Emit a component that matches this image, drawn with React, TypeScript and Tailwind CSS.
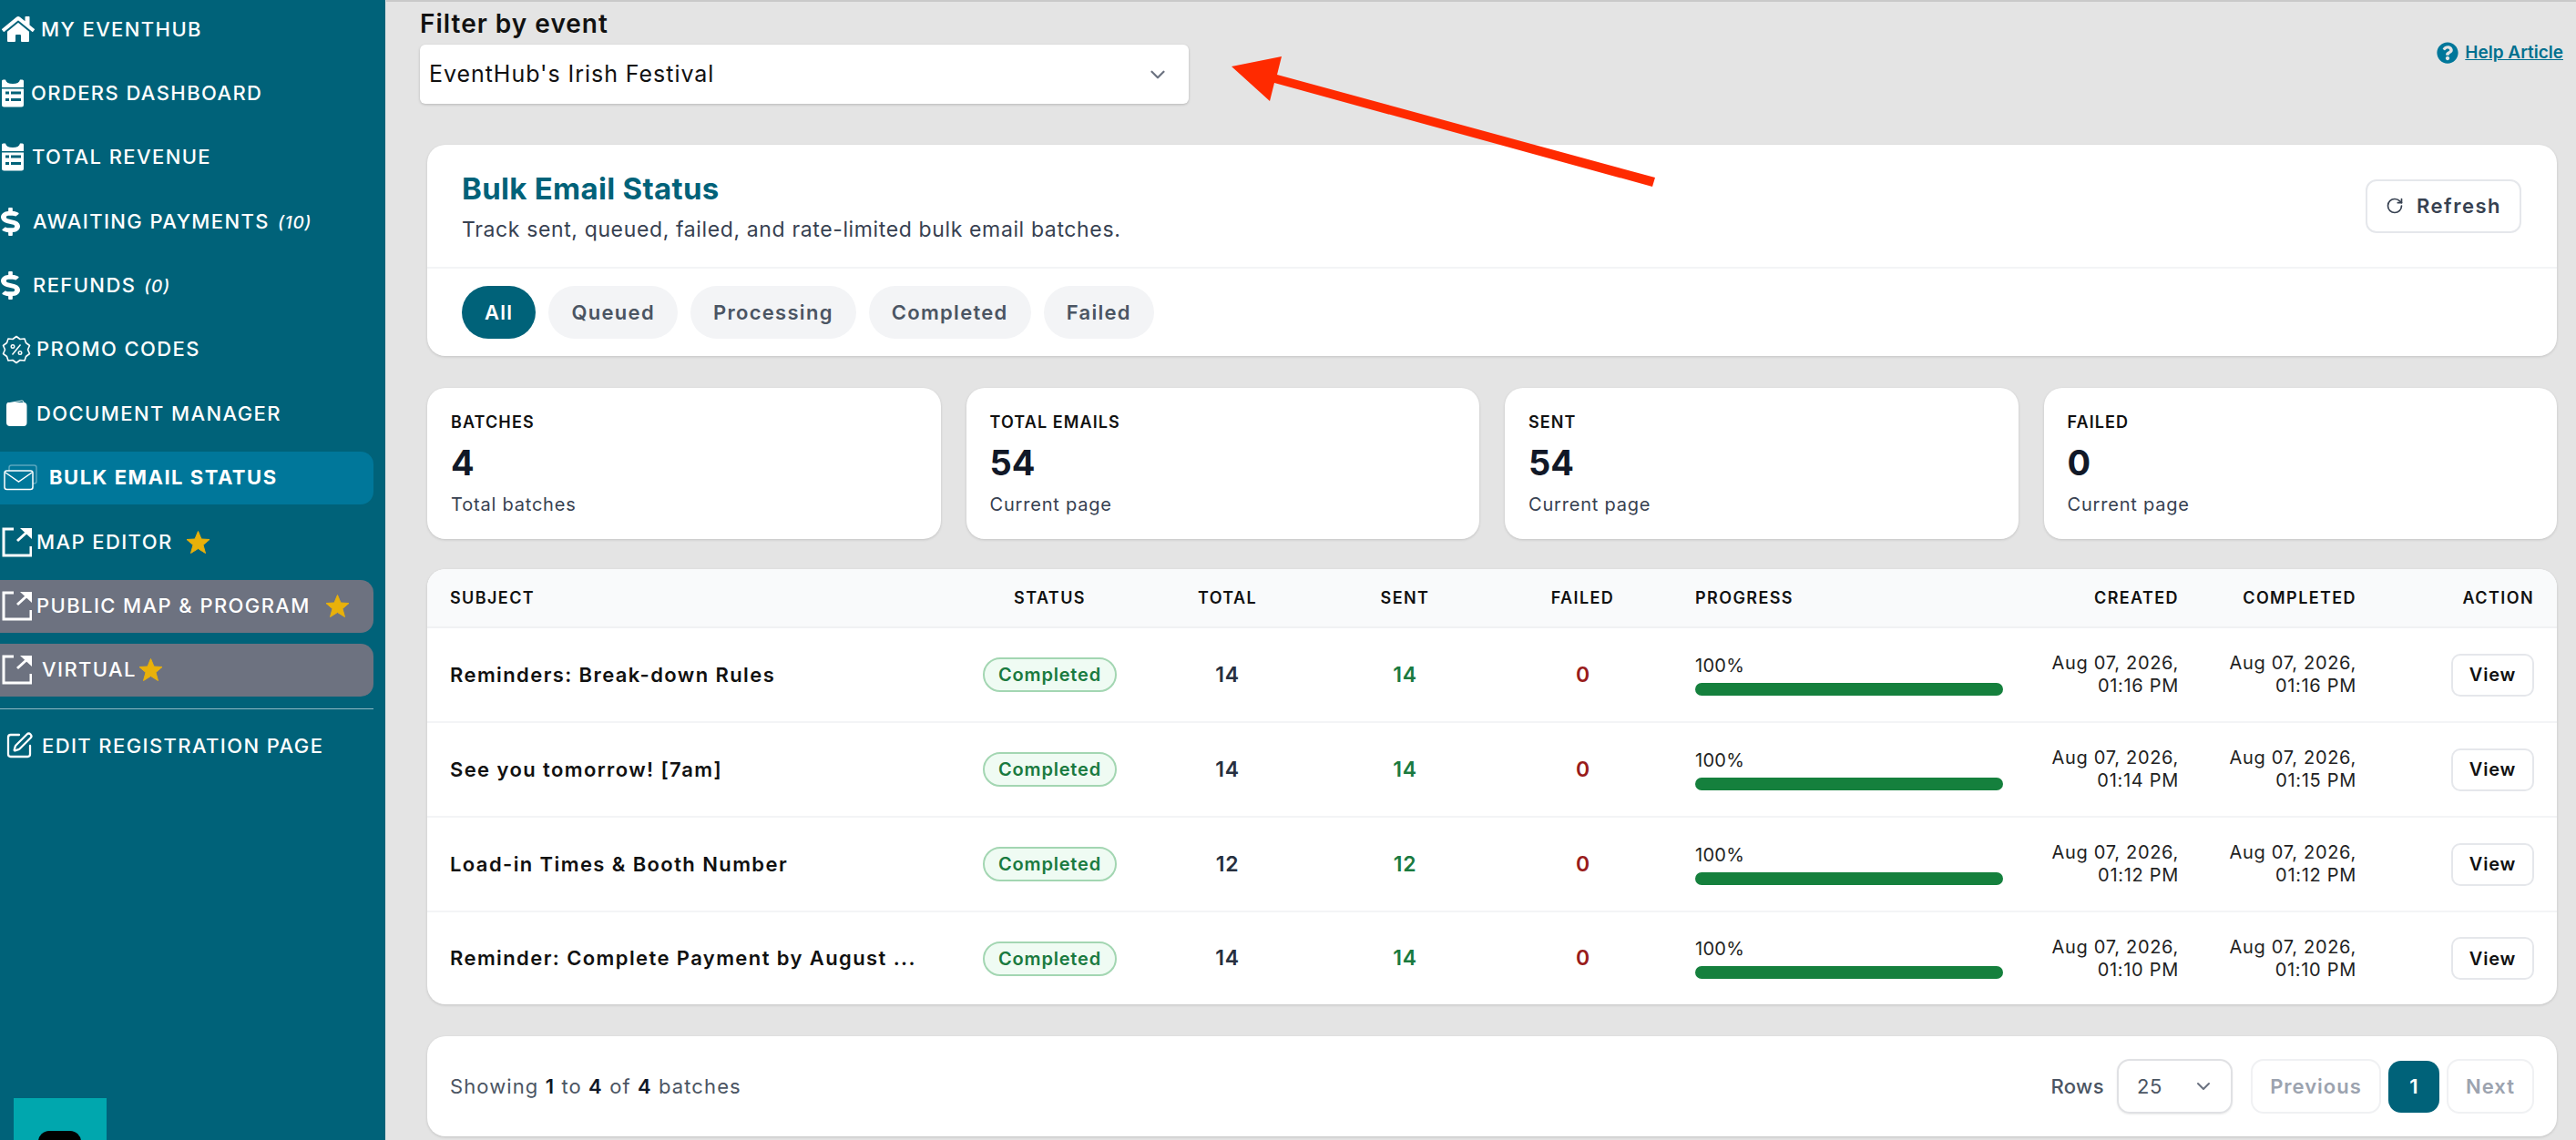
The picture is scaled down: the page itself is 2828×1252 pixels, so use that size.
import React from "react";
import { FaHome, FaDollarSign, FaQuestionCircle } from "react-icons/fa";
import { SquarePen, RotateCw, ChevronDown } from "lucide-react";

function OrdersIcon() {
  return (
    <svg width="26" height="31" viewBox="0 0 26 31" className="shrink-0">
      <path d="M1 2 Q1 0.5 2.5 0.5 L5 0.5 Q6 5 13 5 Q20 5 21 0.5 L23.5 0.5 Q25 0.5 25 2 L25 28 Q25 30.5 22.5 30.5 L3.5 30.5 Q1 30.5 1 28 Z" fill="#fff" />
      <rect x="1" y="9" width="24" height="1.5" fill="#006279" />
      <rect x="5" y="13.5" width="4" height="3" fill="#006279" />
      <rect x="11" y="13.5" width="11" height="3" fill="#006279" />
      <rect x="5" y="21" width="4" height="3" fill="#006279" />
      <rect x="11" y="21" width="11" height="3" fill="#006279" />
    </svg>
  );
}

function DocIcon() {
  return (
    <svg width="24" height="30" viewBox="0 0 24 30" className="shrink-0">
      <path d="M1 6 Q1 3 4 3 L20 3 Q23.500 3 23.500 7 L23.500 25 Q23.500 29 20 29 L5 29 Q1 29 1 25 Z" fill="#fff" />
      <path d="M2 4 L18 1 Q20 1 20 3" fill="none" stroke="#fff" strokeWidth="1" />
    </svg>
  );
}

function PromoIcon() {
  return (
    <svg width="32" height="32" viewBox="0 0 32 32" fill="none" stroke="#fff" className="shrink-0">
      <path
        d="M16 1.500 L20 4.500 L25 4 L26.500 8.500 L30.500 11.500 L28.500 16 L30.500 20.500 L26.500 23.500 L25 28 L20 27.500 L16 30.500 L12 27.500 L7 28 L5.500 23.500 L1.500 20.500 L3.500 16 L1.500 11.500 L5.500 8.500 L7 4 L12 4.500 Z"
        strokeWidth="1.600"
        strokeLinejoin="round"
      />
      <circle cx="12" cy="12.500" r="1.800" strokeWidth="1.400" />
      <circle cx="20" cy="19.500" r="1.800" strokeWidth="1.400" />
      <path d="M20.500 10.500 L11.500 21.500" strokeWidth="1.500" />
    </svg>
  );
}

function MailsIcon() {
  return (
    <svg width="38" height="30" viewBox="0 0 38 30" fill="none" className="shrink-0">
      <g stroke="#fff" strokeOpacity="0.35" strokeWidth="1.5">
        <rect x="6" y="1" width="30" height="20" rx="2.500" />
      </g>
      <rect x="1" y="7" width="31" height="20.500" rx="2.500" fill="#00779a" stroke="#fff" strokeWidth="1.500" />
      <path d="M2 9 L16.500 19 L31 9" stroke="#fff" strokeWidth="1.500" />
    </svg>
  );
}

function ExternalIcon() {
  return (
    <svg width="33" height="33" viewBox="0 0 33 33" fill="none" className="shrink-0">
      <path d="M13 2 H2 V31 H32 V21" stroke="#fff" strokeWidth="3" />
      <path d="M17 15 L28 5" stroke="#fff" strokeWidth="3" />
      <path d="M20 1 H33 V13 Z" fill="#fff" />
    </svg>
  );
}

function Star({ className }: { className: string }) {
  return (
    <svg width="27" height="27" viewBox="0 0 27 27" className={className}>
      <polygon
        points="13.5,1.500 17,10 26,10.500 19,16.500 21.500,25.500 13.500,20.500 5.500,25.500 8,16.500 1,10.500 10,10"
        fill="#e9b10a"
        stroke="#e9b10a"
        strokeWidth="1"
        strokeLinejoin="round"
      />
    </svg>
  );
}

function Dollar() {
  return <FaDollarSign color="#fff" preserveAspectRatio="none" className="h-[31px] w-[21px]" />;
}

function Label({ children, italic }: { children: React.ReactNode; italic?: string }) {
  return (
    <span className="text-[22px] font-medium tracking-[1.4px] text-white whitespace-nowrap">
      {children}
      {italic && <em className="ml-[9px] text-[19px] font-medium tracking-[0.8px]">{italic}</em>}
    </span>
  );
}

function Sidebar() {
  return (
    <aside className="relative w-[423px] shrink-0 bg-[#006279] pt-[3px] font-['Inter',sans-serif]">
      <div className="flex flex-col gap-[12.4px]">
        <div className="flex h-[58px] items-center pl-[2px]">
          <div className="w-[43px]"><FaHome size={36} color="#fff" /></div>
          <Label>MY EVENTHUB</Label>
        </div>
        <div className="flex h-[58px] items-center pl-[1px]">
          <div className="w-[33px]"><OrdersIcon /></div>
          <Label>ORDERS DASHBOARD</Label>
        </div>
        <div className="flex h-[58px] items-center pl-[1px]">
          <div className="w-[34px]"><OrdersIcon /></div>
          <Label>TOTAL REVENUE</Label>
        </div>
        <div className="flex h-[58px] items-center pl-[1px]">
          <div className="w-[35px]"><Dollar /></div>
          <Label italic="(10)">AWAITING PAYMENTS</Label>
        </div>
        <div className="flex h-[58px] items-center pl-[1px]">
          <div className="w-[35px]"><Dollar /></div>
          <Label italic="(0)">REFUNDS</Label>
        </div>
        <div className="flex h-[58px] items-center pl-[2px]">
          <div className="w-[38px]"><PromoIcon /></div>
          <Label>PROMO CODES</Label>
        </div>
        <div className="flex h-[58px] items-center pl-[6px]">
          <div className="w-[34px]"><DocIcon /></div>
          <Label>DOCUMENT MANAGER</Label>
        </div>
        <div className="flex h-[58px] w-[410px] items-center rounded-r-[14px] bg-[#00779a] pl-[4px]">
          <div className="w-[50px]"><MailsIcon /></div>
          <span className="text-[22px] font-bold tracking-[1.5px] text-white">BULK EMAIL STATUS</span>
        </div>
        <div className="flex h-[58px] items-center pl-[2px]">
          <div className="w-[38px]"><ExternalIcon /></div>
          <Label>MAP EDITOR</Label>
          <Star className="ml-[14px]" />
        </div>
        <div className="flex h-[58px] w-[410px] items-center rounded-r-[14px] bg-[#6d7280] pl-[2px]">
          <div className="w-[38px]"><ExternalIcon /></div>
          <Label>PUBLIC MAP &amp; PROGRAM</Label>
          <Star className="ml-[16px]" />
        </div>
        <div className="flex h-[58px] w-[410px] items-center rounded-r-[14px] bg-[#6d7280] pl-[2px]">
          <div className="w-[44px]"><ExternalIcon /></div>
          <Label>VIRTUAL</Label>
          <Star className="ml-[2px]" />
        </div>
      </div>
      <div className="mt-[13px] h-[1.5px] w-[410px] bg-[#8fb9c4]" />
      <div className="mt-[11px] flex h-[58px] items-center pl-[5px]">
        <div className="w-[41px]"><SquarePen size={32} color="#fff" strokeWidth={1.7} /></div>
        <Label>EDIT REGISTRATION PAGE</Label>
      </div>
      {/* chat widget */}
      <div className="absolute bottom-0 left-[15px] h-[46px] w-[102px] overflow-hidden bg-[#00a7ae]">
        <div className="absolute left-[27px] top-[36px] h-[20px] w-[47px] rounded-t-[12px] bg-black" />
      </div>
    </aside>
  );
}

function Pill({ label, active }: { label: string; active?: boolean }) {
  return (
    <span
      className={
        active
          ? "flex h-[58px] items-center rounded-full bg-[#006279] px-[25px] text-[22px] font-semibold tracking-[1.3px] text-white"
          : "flex h-[58px] items-center rounded-full bg-[#f3f4f6] px-[25px] text-[22px] font-semibold tracking-[1.3px] text-[#4b5563]"
      }
    >
      {label}
    </span>
  );
}

function Stat({ title, value, note }: { title: string; value: string; note: string }) {
  return (
    <div className="h-[166px] flex-1 rounded-[20px] bg-white px-[26px] pt-[27px] shadow-[0_1px_3px_rgba(0,0,0,0.15)]">
      <div className="text-[18px] leading-[22px] font-semibold tracking-[1.1px] text-[#111]">{title}</div>
      <div className="mt-[10px] text-[38px] leading-[46px] font-bold text-[#111827]">{value}</div>
      <div className="mt-[11px] text-[20px] leading-[24px] tracking-[0.8px] text-[#374151]">{note}</div>
    </div>
  );
}

const rows = [
  { subject: "Reminders: Break-down Rules", total: 14, created: "01:16 PM", completed: "01:16 PM" },
  { subject: "See you tomorrow! [7am]", total: 14, created: "01:14 PM", completed: "01:15 PM" },
  { subject: "Load-in Times & Booth Number", total: 12, created: "01:12 PM", completed: "01:12 PM" },
  { subject: "Reminder: Complete Payment by August ...", total: 14, created: "01:10 PM", completed: "01:10 PM" },
];

function BatchTable() {
  const th = "h-[64px] text-[18px] font-semibold tracking-[1.4px] text-[#111]";
  return (
    <div className="mt-[33px] overflow-hidden rounded-[20px] bg-white shadow-[0_1px_3px_rgba(0,0,0,0.15)]">
      <table className="w-full table-fixed border-collapse">
        <colgroup>
          <col className="w-[586px]" />
          <col className="w-[195px]" />
          <col className="w-[195px]" />
          <col className="w-[195px]" />
          <col className="w-[195px]" />
          <col className="w-[390px]" />
          <col className="w-[193px]" />
          <col className="w-[195px]" />
          <col className="w-[194px]" />
        </colgroup>
        <thead>
          <tr className="border-b-2 border-[#f0f1f3] bg-[#f9fafb]">
            <th className={th + " pl-[25px] text-left"}>SUBJECT</th>
            <th className={th + " text-center"}>STATUS</th>
            <th className={th + " text-center"}>TOTAL</th>
            <th className={th + " text-center"}>SENT</th>
            <th className={th + " text-center"}>FAILED</th>
            <th className={th + " pl-[26px] text-left"}>PROGRESS</th>
            <th className={th + " pr-[26px] text-right"}>CREATED</th>
            <th className={th + " pr-[26px] text-right"}>COMPLETED</th>
            <th className={th + " pr-[25px] text-right"}>ACTION</th>
          </tr>
        </thead>
        <tbody>
          {rows.map((row, i) => (
            <tr key={row.subject} className={i < rows.length - 1 ? "h-[104px] border-b-2 border-[#f3f4f6]" : "h-[102px]"}>
              <td className="pl-[25px] text-[22px] font-semibold tracking-[1.4px] whitespace-nowrap text-[#111]">{row.subject}</td>
              <td className="text-center">
                <span className="inline-flex h-[38px] w-[147px] items-center justify-center rounded-full border-2 border-[#a3d6b2] bg-[#effbf3] text-[20px] font-semibold tracking-[0.8px] text-[#1a7a3f]">
                  Completed
                </span>
              </td>
              <td className="text-center text-[23px] font-semibold tracking-[0.8px] text-[#27303f]">{row.total}</td>
              <td className="text-center text-[23px] font-semibold tracking-[0.8px] text-[#1a7a3f]">{row.total}</td>
              <td className="text-center text-[23px] font-semibold text-[#991b1b]">0</td>
              <td className="pr-[26px] pl-[26px]">
                <div className="text-[20px] leading-[24px] tracking-[0.3px] text-[#222]">100%</div>
                <div className="mt-[7px] h-[14px] rounded-full bg-[#15803d]" />
              </td>
              <td className="pr-[26px] text-right text-[20px] leading-[25px] tracking-[0.7px] text-[#222]">
                Aug 07, 2026,<br />{row.created}
              </td>
              <td className="pr-[26px] text-right text-[20px] leading-[25px] tracking-[0.7px] text-[#222]">
                Aug 07, 2026,<br />{row.completed}
              </td>
              <td className="pr-[25px] text-right">
                <span className="inline-flex h-[47px] w-[91px] items-center justify-center rounded-[10px] border-2 border-[#e5e7eb] bg-white text-[20px] font-semibold tracking-[0.8px] text-[#111]">
                  View
                </span>
              </td>
            </tr>
          ))}
        </tbody>
      </table>
    </div>
  );
}

function Pagination() {
  return (
    <div className="mt-[35px] flex h-[110px] items-center justify-between rounded-[20px] bg-white pr-[25px] pl-[25px] shadow-[0_1px_3px_rgba(0,0,0,0.15)]">
      <div className="text-[22px] tracking-[1.1px] text-[#4b5563]">
        Showing <b className="font-semibold text-[#111827]">1</b> to <b className="font-semibold text-[#111827]">4</b> of{" "}
        <b className="font-semibold text-[#111827]">4</b> batches
      </div>
      <div className="flex items-center">
        <span className="text-[22px] font-medium tracking-[0.4px] text-[#4b5563]">Rows</span>
        <div className="ml-[14px] flex h-[60px] w-[127px] items-center justify-between rounded-[14px] border-2 border-[#e0e1e4] pr-[18px] pl-[20px] text-[22px] tracking-[0.5px] text-[#4b5563] shadow-[0_1px_2px_rgba(0,0,0,0.08)]">
          25
          <ChevronDown size={24} color="#6b7280" />
        </div>
        <span className="ml-[20px] flex h-[60px] w-[143px] items-center justify-center rounded-[14px] border-2 border-[#f0f1f3] text-[22px] font-semibold tracking-[1px] text-[#9ca3af]">
          Previous
        </span>
        <span className="ml-[8px] flex h-[57px] w-[56px] items-center justify-center rounded-[14px] bg-[#006279] text-[22px] font-semibold text-white">
          1
        </span>
        <span className="ml-[8px] flex h-[60px] w-[96px] items-center justify-center rounded-[14px] border-2 border-[#f0f1f3] text-[22px] font-semibold tracking-[1px] text-[#9ca3af]">
          Next
        </span>
      </div>
    </div>
  );
}

export default function App() {
  return (
    <div className="relative flex h-screen overflow-hidden bg-[#e4e4e4] font-['Inter',sans-serif]">
      <Sidebar />
      <main className="ml-[1px] flex-1 border-t-2 border-[#c9c9c9]">
        <div className="flex items-center justify-between pr-[14px] pl-[37px]">
          <div>
            <div className="h-[47px] pt-[7px] text-[28px] leading-[34px] font-semibold tracking-[1px] text-[#111]">Filter by event</div>
            <div className="flex h-[65px] w-[844px] items-center justify-between rounded-[6px] bg-white pr-[21px] pl-[10px] shadow-[0_1px_3px_rgba(0,0,0,0.2)]">
              <span className="text-[25px] tracking-[0.95px] text-[#111]">EventHub's Irish Festival</span>
              <ChevronDown size={26} color="#6b7280" />
            </div>
          </div>
          <a className="mt-[20px] flex items-center gap-[7px] self-start pt-[22px] text-[19px] font-semibold text-[#00708f] underline">
            <FaQuestionCircle size={24} color="#00779a" />
            Help Article
          </a>
        </div>

        <div className="mt-[45px] mr-[21px] ml-[45px]">
          <section className="h-[232px] rounded-[20px] bg-white shadow-[0_1px_3px_rgba(0,0,0,0.15)]">
            <div className="flex h-[136px] items-center justify-between border-b-2 border-[#f3f4f6] pr-[39px] pl-[38px]">
              <div>
                <h1 className="text-[33px] leading-[40px] font-bold tracking-[0.3px] text-[#006279]">Bulk Email Status</h1>
                <p className="mt-[11px] text-[23px] leading-[28px] tracking-[0.63px] text-[#374151]">
                  Track sent, queued, failed, and rate-limited bulk email batches.
                </p>
              </div>
              <span className="flex h-[59px] w-[171px] items-center justify-center gap-[14px] rounded-[12px] border-2 border-[#e5e7eb] text-[22px] font-semibold tracking-[1.5px] text-[#374151]">
                <RotateCw size={20} color="#374151" />
                Refresh
              </span>
            </div>
            <div className="flex gap-[14px] pt-[19px] pl-[38px]">
              <Pill label="All" active />
              <Pill label="Queued" />
              <Pill label="Processing" />
              <Pill label="Completed" />
              <Pill label="Failed" />
            </div>
          </section>

          <div className="mt-[35px] flex gap-[28px]">
            <Stat title="BATCHES" value="4" note="Total batches" />
            <Stat title="TOTAL EMAILS" value="54" note="Current page" />
            <Stat title="SENT" value="54" note="Current page" />
            <Stat title="FAILED" value="0" note="Current page" />
          </div>

          <BatchTable />
          <Pagination />
        </div>
      </main>

      {/* annotation arrow drawn over the screenshot */}
      <svg className="pointer-events-none absolute top-0 left-0" width="1900" height="240" viewBox="0 0 1900 240">
        <path d="M1352 73 L1407 62 L1402 82 L1817 195 L1814 205 L1399 91 L1394 111 Z" fill="#ff2a00" />
      </svg>
    </div>
  );
}
